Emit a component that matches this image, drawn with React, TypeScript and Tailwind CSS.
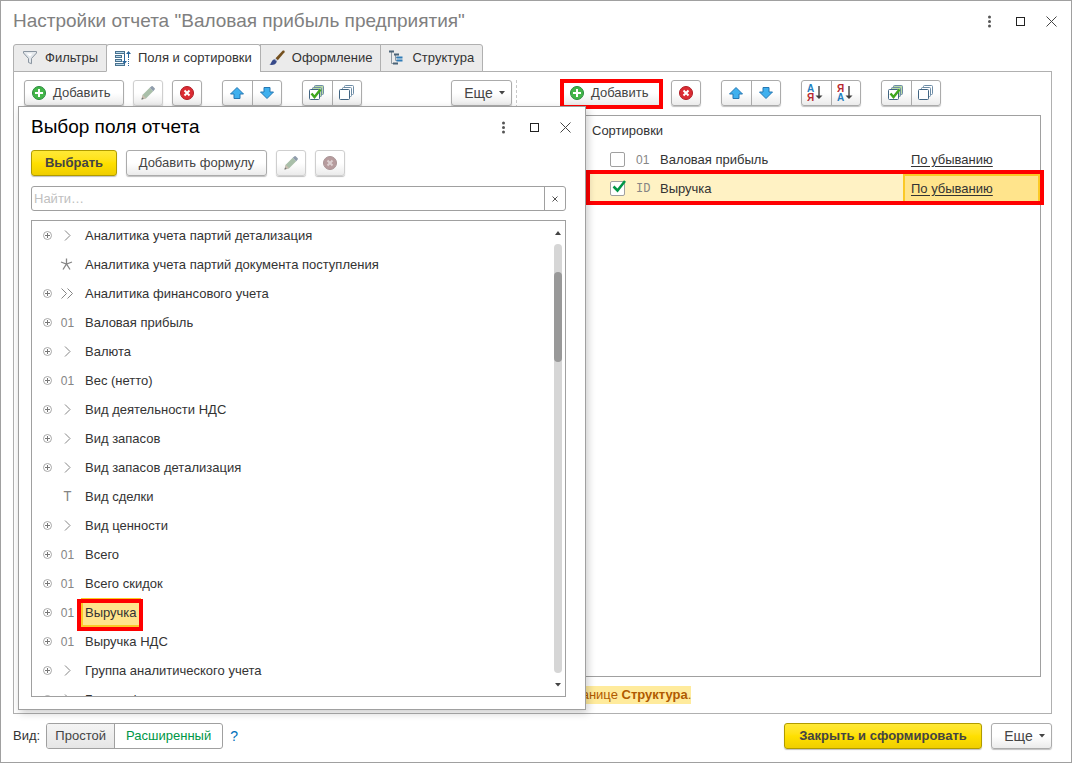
import type { ReactNode } from 'react';
import clsx from 'clsx';

type FieldKind = 'ref' | 'refs' | 'star' | 'number' | 'text';

interface Field {
  name: string;
  kind: FieldKind;
  leaf?: boolean;
  selected?: boolean;
}

const fields: Field[] = [
  { name: 'Аналитика учета партий детализация', kind: 'ref' },
  { name: 'Аналитика учета партий документа поступления', kind: 'star', leaf: true },
  { name: 'Аналитика финансового учета', kind: 'refs' },
  { name: 'Валовая прибыль', kind: 'number' },
  { name: 'Валюта', kind: 'ref' },
  { name: 'Вес (нетто)', kind: 'number' },
  { name: 'Вид деятельности НДС', kind: 'ref' },
  { name: 'Вид запасов', kind: 'ref' },
  { name: 'Вид запасов детализация', kind: 'ref' },
  { name: 'Вид сделки', kind: 'text', leaf: true },
  { name: 'Вид ценности', kind: 'ref' },
  { name: 'Всего', kind: 'number' },
  { name: 'Всего скидок', kind: 'number' },
  { name: 'Выручка', kind: 'number', selected: true },
  { name: 'Выручка НДС', kind: 'number' },
  { name: 'Группа аналитического учета', kind: 'ref' },
  { name: 'Группа финансового учета', kind: 'ref' },
];

/* ---------- icons ---------- */

const PlusIcon = () => (
  <svg width="16" height="16" viewBox="0 0 16 16">
    <circle cx="8" cy="8" r="6.5" fill="#43b649" stroke="#2a8a3e" />
    <path d="M8 4v8M4 8h8" stroke="#fff" strokeWidth="2" />
  </svg>
);

const DeleteIcon = ({ muted }: { muted?: boolean }) => (
  <svg width="16" height="16" viewBox="0 0 16 16">
    <circle
      cx="8"
      cy="8"
      r="6.5"
      fill={muted ? '#b79c9e' : '#db2b33'}
      stroke={muted ? '#a99496' : '#b01c24'}
    />
    <path
      d="M5.5 5.5l5 5M10.5 5.5l-5 5"
      stroke={muted ? '#dcd0d1' : '#fff'}
      strokeWidth="2"
    />
  </svg>
);

const PencilIcon = () => (
  <svg width="16" height="16" viewBox="0 0 16 16">
    <path d="M1.5 14.5l1.2-4.7 7-7 3.5 3.5-7 7z" fill="#a9bfa9" />
    <path d="M9.7 2.8l1.8-1.6q.6-.5 1.2 0l2 2q.5.6 0 1.2l-1.5 1.9z" fill="#8f9cab" />
    <path d="M1.5 14.5l1.2-4.7 3.5 3.5z" fill="#c9beb0" />
    <path d="M1.5 14.5l.6-2.2 1.7 1.6z" fill="#777" />
  </svg>
);

const ArrowIcon = ({ down }: { down?: boolean }) => (
  <svg width="16" height="16" viewBox="0 0 16 16">
    <path
      d={
        down
          ? 'M5 2.5h6v4.5h3.5L8 13.5 1.5 7H5z'
          : 'M8 2.5L14.5 9H11v4.5H5V9H1.5z'
      }
      fill="#3fb0ee"
      stroke="#2577b3"
      strokeLinejoin="round"
    />
  </svg>
);

const SheetsIcon = ({ checked }: { checked?: boolean }) => (
  <svg width="18" height="18" viewBox="0 0 18 18">
    <g fill={checked ? '#b9dba5' : '#fff'} stroke="#6d8ca6">
      <rect x="6.5" y="1.5" width="9" height="9" rx="1" />
      <rect x="4.5" y="3.5" width="9" height="9" rx="1" />
      <rect x="1.5" y="5.5" width="10" height="10" rx="1" fill="#fff" stroke="#416482" />
    </g>
    {checked && (
      <path d="M3.5 9.5L6.5 13l6-7.5" fill="none" stroke="#3fa71d" strokeWidth="2.5" />
    )}
  </svg>
);

const SortIcon = ({ reverse }: { reverse?: boolean }) => (
  <svg width="18" height="20" viewBox="0 0 18 20">
    <g fontFamily="Liberation Sans, sans-serif" fontSize="10" fontWeight="bold">
      <text x="0" y="9" fill={reverse ? '#b8292f' : '#1f7fc0'}>
        {reverse ? 'Я' : 'А'}
      </text>
      <text x="0" y="18" fill={reverse ? '#1f7fc0' : '#b8292f'}>
        {reverse ? 'А' : 'Я'}
      </text>
    </g>
    <path d="M12 3v11" stroke="#404040" strokeWidth="1.4" />
    <path d="M8.5 12.5h7L12 16z" fill="#404040" />
  </svg>
);

const FunnelIcon = () => (
  <svg width="16" height="16" viewBox="0 0 16 16">
    <path
      d="M1.5 1.5h13V3L9.5 8.5v5.2L6.5 12.5v-4L1.5 3z"
      fill="#e4e8ec"
      stroke="#8a95a0"
    />
    <path d="M4.5 3.5h6L8 6.5z" fill="#fff" />
  </svg>
);

const FieldsIcon = () => (
  <svg width="16" height="16" viewBox="0 0 16 16">
    <path d="M0 2.5h10M0 6.5h7M0 10.5h7M0 14.5h10" stroke="#49728f" strokeWidth="3" />
    <path d="M1 2.5h8M1 6.5h5M1 10.5h5M1 14.5h8" stroke="#b5d6ea" />
    <path d="M9.5 4v8M13.5 3v5" stroke="#28659b" />
    <path d="M13.5 9v7" stroke="#28659b" strokeDasharray="1 1" />
    <path d="M7 11h5l-2.5 3zM11 4h5l-2.5-3z" fill="#28659b" />
  </svg>
);

const BrushIcon = () => (
  <svg width="16" height="16" viewBox="0 0 16 16">
    <path d="M6.5 8.2L13.3 1c1-1 3-.4 2.2 1.2L8.8 10.3z" fill="#74501f" />
    <path d="M6.4 8.3l2.3 2-1 1.1-2.4-2z" fill="#b9bfd0" />
    <path d="M5.3 9.2l2.5 2.2C7.2 14.5 3.5 15.5.3 14.6c2.2-.6 2-4.600 5-5.400z" fill="#374a8a" />
  </svg>
);

const StructureIcon = () => (
  <svg width="16" height="16" viewBox="0 0 16 16">
    <path d="M2.5 2v11.5H5M6.5 5v5.500h1.500M6.500 7.500H8" fill="none" stroke="#8f9aa3" />
    <path d="M0 1.500h5M5 4.500h5M4 13.500h5" stroke="#4a6377" strokeWidth="2" />
    <path d="M7.500 7.500h6M7.500 10.500h6" stroke="#2f7cb8" strokeWidth="2" />
  </svg>
);

const Caret = () => (
  <svg width="6" height="4" viewBox="0 0 6 4">
    <path d="M0 0h6L3 3.5z" fill="#444" />
  </svg>
);

const ExpandIcon = () => (
  <svg width="11" height="11" viewBox="0 0 11 11" fill="none">
    <circle cx="5.5" cy="5.5" r="4" stroke="#a8a8a8" />
    <path d="M5.5 3v5M3 5.5h5" stroke="#777" />
  </svg>
);

function KindIcon({ kind }: { kind: FieldKind }) {
  if (kind === 'number') return <span className="text-[12px]">01</span>;
  if (kind === 'text')
    return (
      <span className="font-['Liberation_Mono',monospace] text-[14px] leading-none">T</span>
    );
  return (
    <svg width="15" height="15" viewBox="0 0 15 15" fill="none" stroke="#858585">
      {kind === 'ref' && <path d="M5 2.5l5 5-5 5" />}
      {kind === 'refs' && <path d="M1.5 2.5l5 5-5 5M7.5 2.5l5 5-5 5" />}
      {kind === 'star' && (
        <path
          d="M6.5 1.5V7M1 5l5.5 2L12 5M3 12.5L6.5 7l3.5 5.5"
          strokeWidth="1.3"
        />
      )}
    </svg>
  );
}

/* ---------- controls ---------- */

interface ButtonProps {
  children: ReactNode;
  label?: string;
  className?: string;
  muted?: boolean;
}

function Button({ children, label, className, muted }: ButtonProps) {
  return (
    <button
      type="button"
      aria-label={label}
      className={clsx(
        'flex h-[26px] shrink-0 items-center rounded-[3px] border bg-linear-to-b from-white from-50% to-[#ebebeb] text-[#444] shadow-[0_1px_1px_#00000040]',
        muted ? 'border-[#cfcfcf]' : 'border-[#ababab]',
        className
      )}
    >
      {children}
    </button>
  );
}

function PrimaryButton({ children, className }: ButtonProps) {
  return (
    <button
      type="button"
      className={clsx(
        'flex h-[26px] shrink-0 items-center justify-center rounded-[3px] border border-[#b09b00] bg-linear-to-b from-[#ffe935] via-[#ffe000] to-[#efce00] font-bold text-[#444] shadow-[0_1px_1px_#00000040]',
        className
      )}
    >
      {children}
    </button>
  );
}

function ButtonPair({ items }: { items: { label: string; icon: ReactNode }[] }) {
  return (
    <div className="flex h-[26px] w-[60px] shrink-0 divide-x divide-[#ababab] rounded-[3px] border border-[#ababab] bg-linear-to-b from-white from-50% to-[#ebebeb] shadow-[0_1px_1px_#00000040]">
      {items.map((item) => (
        <button
          key={item.label}
          type="button"
          aria-label={item.label}
          className="flex flex-1 items-center justify-center"
        >
          {item.icon}
        </button>
      ))}
    </div>
  );
}

const moveItems = [
  { label: 'Переместить вверх', icon: <ArrowIcon /> },
  { label: 'Переместить вниз', icon: <ArrowIcon down /> },
];

const checkItems = [
  { label: 'Установить флажки', icon: <SheetsIcon checked /> },
  { label: 'Снять флажки', icon: <SheetsIcon /> },
];

const sortItems = [
  { label: 'По возрастанию', icon: <SortIcon /> },
  { label: 'По убыванию', icon: <SortIcon reverse /> },
];

function AddButton() {
  return (
    <Button className="w-[100px] gap-[6px] pl-[6px]">
      <PlusIcon />
      Добавить
    </Button>
  );
}

function MoreButton() {
  return (
    <Button className="w-[61px] justify-center gap-[6px] pl-[6px] text-sm">
      Еще
      <Caret />
    </Button>
  );
}

function WindowButtons() {
  return (
    <div className="flex text-[#333]">
      <button type="button" aria-label="Меню" className="flex w-[31px] justify-center">
        <svg width="15" height="15" viewBox="0 0 15 15" fill="#555">
          <circle cx="7.5" cy="3" r="1.5" />
          <circle cx="7.5" cy="7.5" r="1.5" />
          <circle cx="7.5" cy="12" r="1.5" />
        </svg>
      </button>
      <button type="button" aria-label="Развернуть" className="flex w-[31px] justify-center">
        <svg width="15" height="15" viewBox="0 0 15 15" fill="none" stroke="#222">
          <rect x="3.5" y="3.5" width="8" height="8" />
        </svg>
      </button>
      <button type="button" aria-label="Закрыть" className="flex w-[31px] justify-center">
        <svg width="15" height="15" viewBox="0 0 15 15" fill="none" stroke="#444">
          <path d="M2.5 2.5l10 10M12.5 2.5l-10 10" />
        </svg>
      </button>
    </div>
  );
}

const tabs = [
  { name: 'Фильтры', icon: <FunnelIcon /> },
  { name: 'Поля и сортировки', icon: <FieldsIcon />, active: true },
  { name: 'Оформление', icon: <BrushIcon /> },
  { name: 'Структура', icon: <StructureIcon /> },
];

function Tabs() {
  return (
    <div role="tablist" className="relative z-10 mx-3 mt-[3px] -mb-px flex">
      {tabs.map((tab, i) => (
        <button
          key={tab.name}
          type="button"
          role="tab"
          aria-selected={!!tab.active}
          className={clsx(
            'flex h-7 items-center gap-[7px] border border-[#b0b0b0] px-2',
            i > 0 && '-ml-px',
            i === 0 && 'rounded-tl-[3px]',
            i === tabs.length - 1 && 'rounded-tr-[3px]',
            tab.active ? 'rounded-t-[3px] border-b-white bg-white' : 'bg-[#ebebeb]'
          )}
        >
          {tab.icon}
          {tab.name}
        </button>
      ))}
    </div>
  );
}

/* ---------- sort list ---------- */

const sortings = [
  { name: 'Валовая прибыль', type: '01', checked: false },
  { name: 'Выручка', type: 'ID', checked: true },
];

function SortList() {
  return (
    <div className="mt-[9px] flex-1 border border-[#a0a0a0]">
      <table className="w-full table-fixed border-collapse">
        <colgroup>
          <col className="w-[73px]" />
          <col className="w-6" />
          <col />
          <col className="w-[137px]" />
        </colgroup>
        <thead>
          <tr className="h-[29px]">
            <th colSpan={4} className="p-0 pl-[29px] text-left font-normal">
              Сортировки
            </th>
          </tr>
        </thead>
        <tbody>
          {sortings.map((row) => (
            <tr
              key={row.name}
              className={clsx('relative h-[29px]', row.checked && 'bg-[#fff2c4]')}
            >
              <td className="p-0 pl-[47px]">
                <label className="relative block size-[15px]">
                  <input
                    type="checkbox"
                    defaultChecked={row.checked}
                    aria-label={row.name}
                    className="block size-[15px] appearance-none rounded-[2px] border border-[#a0a0a0] bg-white"
                  />
                  {row.checked && (
                    <svg
                      className="absolute top-0 left-0 overflow-visible"
                      width="15"
                      height="15"
                      viewBox="0 0 15 15"
                    >
                      <path
                        d="M3.5 5.5l4 4L15 0"
                        fill="none"
                        stroke="#009646"
                        strokeWidth="2.5"
                      />
                    </svg>
                  )}
                </label>
              </td>
              <td
                className={clsx(
                  'p-0 text-[12px] text-[#858585]',
                  row.type === 'ID' && "font-['Liberation_Mono',monospace]"
                )}
              >
                {row.type}
              </td>
              <td className="p-0">{row.name}</td>
              <td className="p-0">
                <div
                  className={clsx(
                    'flex h-[29px] items-center border-2 pl-[6px]',
                    row.checked ? 'border-[#fbc926] bg-[#ffe48c]' : 'border-transparent'
                  )}
                >
                  <a href="#order" className="underline underline-offset-2">
                    По убыванию
                  </a>
                </div>
                {row.checked && (
                  <span className="pointer-events-none absolute -top-1 -right-1 -bottom-[2px] left-[23px] z-10 border-4 border-[#ff0000]" />
                )}
              </td>
            </tr>
          ))}
        </tbody>
      </table>
    </div>
  );
}

/* ---------- field picker ---------- */

function FieldTree() {
  return (
    <div className="mt-[9px] flex h-[477px] overflow-hidden border border-[#a0a0a0]">
      <ul className="min-w-0 flex-1">
        {fields.map((field) => (
          <li key={field.name} className="flex h-[29px] items-center pl-[10px]">
            <span className="flex w-[11px]">
              {!field.leaf && (
                <button type="button" aria-label="Развернуть" className="flex">
                  <ExpandIcon />
                </button>
              )}
            </span>
            <span className="ml-[7px] flex w-[15px] justify-center text-[#858585]">
              <KindIcon kind={field.kind} />
            </span>
            <span
              className={clsx(
                'relative ml-[6px] flex h-[29px] items-center border-2 px-[2px]',
                field.selected ? 'border-[#fbc926] bg-[#ffe48c]' : 'border-transparent'
              )}
            >
              {field.name}
              {field.selected && (
                <span className="pointer-events-none absolute -top-px -right-1 -bottom-[6px] -left-[6px] z-10 border-4 border-[#ff0000]" />
              )}
            </span>
          </li>
        ))}
      </ul>
      <div className="mr-[3px] flex w-2 flex-col">
        <button type="button" aria-label="Вверх" className="flex h-[23px] items-center justify-center">
          <svg width="6" height="4" viewBox="0 0 6 4">
            <path d="M0 4h6L3 0z" fill="#444" />
          </svg>
        </button>
        <div className="flex-1 rounded-full bg-[#d6d6d6] pt-7">
          <div className="h-[90px] rounded-full bg-[#999]" />
        </div>
        <button type="button" aria-label="Вниз" className="flex h-[23px] items-center justify-center">
          <Caret />
        </button>
      </div>
    </div>
  );
}

function FieldPicker() {
  return (
    <section
      role="dialog"
      aria-label="Выбор поля отчета"
      className="absolute top-[105px] left-[17px] z-20 w-[568px] border border-[#a0a0a0] bg-white pb-3 shadow-[2px_3px_8px_#00000033]"
    >
      <header className="mb-[3px] flex h-10 items-center justify-between pr-1 pl-3">
        <h2 className="text-[19px] text-black">Выбор поля отчета</h2>
        <WindowButtons />
      </header>
      <div className="pr-[19px] pl-3">
        <div className="flex gap-[9px]">
          <PrimaryButton className="w-[86px]">Выбрать</PrimaryButton>
          <Button className="w-[141px] justify-center">Добавить формулу</Button>
          <Button label="Изменить" muted className="w-[30px] justify-center">
            <PencilIcon />
          </Button>
          <Button label="Удалить" muted className="w-[30px] justify-center">
            <DeleteIcon muted />
          </Button>
        </div>
        <div className="mt-[10px] flex h-[25px] rounded-[3px] border border-[#a0a0a0]">
          <input
            type="text"
            aria-label="Найти"
            placeholder="Найти…"
            className="min-w-0 flex-1 px-[2px] outline-none placeholder:text-[#c0c0c0]"
          />
          <button
            type="button"
            aria-label="Очистить"
            className="flex w-[21px] items-center justify-center border-l border-[#a0a0a0]"
          >
            <svg width="6" height="6" viewBox="0 0 6 6" stroke="#555">
              <path d="M.5.5l5 5M5.5.5l-5 5" />
            </svg>
          </button>
        </div>
        <FieldTree />
      </div>
    </section>
  );
}

export default function App() {
  return (
    <main className="relative flex min-h-screen flex-col border border-[#a0a0a0] bg-white font-['Liberation_Sans',Arial,sans-serif] text-[13px] text-[#333]">
      <header className="flex h-10 items-center justify-between pr-1 pl-3">
        <h1 className="text-[19px] text-[#808080]">
          Настройки отчета "Валовая прибыль предприятия"
        </h1>
        <WindowButtons />
      </header>

      <Tabs />

      <div className="mr-[19px] ml-3 flex flex-1 border border-[#b0b0b0] px-[10px] pt-2 pb-[9px]">
        <div className="flex w-[488px] shrink-0 items-start">
          <AddButton />
          <Button label="Изменить" muted className="ml-[9px] w-[30px] justify-center">
            <PencilIcon />
          </Button>
          <Button label="Удалить" className="mr-5 ml-[9px] w-[30px] justify-center">
            <DeleteIcon />
          </Button>
          <div className="flex gap-5">
            <ButtonPair items={moveItems} />
            <ButtonPair items={checkItems} />
          </div>
          <div className="ml-auto">
            <MoreButton />
          </div>
        </div>

        <div className="mr-[45px] ml-1 border-l border-dashed border-[#c8c8c8]" />

        <div className="flex min-w-0 flex-1 flex-col">
          <div className="flex">
            <div className="relative">
              <AddButton />
              <span className="pointer-events-none absolute -top-px -right-px -bottom-[3px] -left-[2px] border-4 border-[#ff0000]" />
            </div>
            <Button label="Удалить" className="mr-5 ml-[9px] w-[30px] justify-center">
              <DeleteIcon />
            </Button>
            <div className="flex gap-5">
              <ButtonPair items={moveItems} />
              <ButtonPair items={sortItems} />
              <ButtonPair items={checkItems} />
            </div>
          </div>
          <SortList />
          <p className="mt-[9px] self-start bg-[#ffeb9c] leading-[18px] text-[#b05a00]">
            странице <b>Структура</b>.
          </p>
        </div>
      </div>

      <footer className="mr-[19px] ml-3 flex items-center pt-[9px] pb-[13px]">
        <span>Вид:</span>
        <div className="ml-[6px] flex h-[26px] divide-x divide-[#a0a0a0] overflow-hidden rounded-[3px] border border-[#a0a0a0]">
          <button
            type="button"
            className="w-[68px] bg-linear-to-b from-[#f4f4f4] to-[#e6e6e6] text-[#444]"
          >
            Простой
          </button>
          <button type="button" aria-pressed="true" className="w-[107px] text-[#009646]">
            Расширенный
          </button>
        </div>
        <a href="#help" className="ml-[7px] text-sm text-[#0070ba]">
          ?
        </a>
        <div className="ml-auto flex gap-[9px]">
          <PrimaryButton className="w-[198px]">Закрыть и сформировать</PrimaryButton>
          <MoreButton />
        </div>
      </footer>

      <FieldPicker />
    </main>
  );
}
